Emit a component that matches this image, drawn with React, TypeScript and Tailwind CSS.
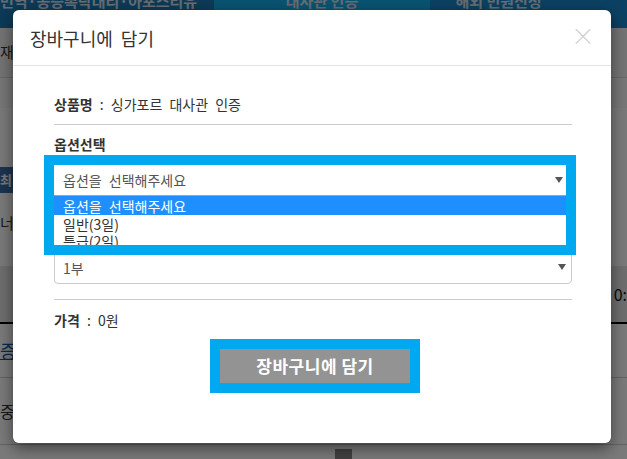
import React from 'react';

const FONT = { fontFamily: '"Noto Sans CJK KR", "Noto Sans", sans-serif' };

const Caret = () => (
  <svg width="8" height="6" viewBox="0 0 8 6" className="shrink-0">
    <path d="M0 0 L8 0 L4 6 Z" fill="#555" />
  </svg>
);

// page behind the modal (only edges are visible)
const BackPage: React.FC = () => (
  <div className="flex flex-col w-full h-full bg-white">
    <div className="h-[28px] flex overflow-hidden bg-[#1a7ab8] text-[#d8e4ee] text-[15px] font-bold">
      <div className="w-[214px] flex items-start -mt-[10px]">번역·공증촉탁대리·아포스티유</div>
      <div className="w-[216px] flex justify-center items-start -mt-[10px] bg-[#14b0ee]">대사관 인증</div>
      <div className="flex-1 flex justify-center items-start -mt-[10px] pr-[60px] bg-[#1a88d0]">해외 민원신청</div>
    </div>
    <div className="h-[50px] bg-[#f2f2f2] border-b border-[#d8d8d8] flex items-center text-[15px] text-[#333]">재 대</div>
    <div className="h-[30px] bg-[#f8f8f8]" />
    <div className="h-[59px]" />
    <div className="h-[26px] flex">
      <div className="w-[14px] bg-[#3c6ea8] text-white text-[13px] font-bold flex items-center">최</div>
    </div>
    <div className="h-[22px]" />
    <div className="h-[18px] flex items-center text-[15px] text-[#333]">너<span className="w-[2px] h-[14px] bg-[#3c7cc0] ml-[1px]" /></div>
    <div className="h-[34px]" />
    <div className="h-[56px] bg-[#e6e6e6] flex items-center justify-end text-[16px] text-[#111]">0:</div>
    <div className="h-[2px] bg-black" />
    <div className="h-[54px] border-b border-[#cfcfcf] flex items-center text-[18px] text-[#0a5aa8] underline">증</div>
    <div className="h-[67px] border-b border-[#cfcfcf] flex items-center text-[16px] text-[#333]">중</div>
    <div className="flex-1 flex pt-[4px] pl-[335px] text-[13px] text-[#333]">
      <span className="w-[17px] h-[10px] bg-[#888]" />
    </div>
  </div>
);

const App: React.FC = () => {
  return (
    <div className="relative w-[627px] h-[459px] overflow-hidden" style={FONT}>
      <BackPage />
      <div className="absolute inset-0 bg-black/[0.52]" />

      <div className="absolute left-[13px] top-[10px] w-[598px] h-[433px] bg-white rounded-[6px] shadow-[0_5px_15px_rgba(0,0,0,0.5)] flex flex-col [word-spacing:4px]">
        <div className="h-[56px] shrink-0 border-b border-[#e5e5e5] flex items-center pl-[17px] pr-[16px]">
          <h4 className="text-[18px] text-[#333] leading-none">장바구니에 담기</h4>
          <div className="flex-1" />
          <button className="text-[24px] leading-none text-[#cfcfcf] font-light -mt-[6px]">×</button>
        </div>

        <div className="flex flex-col pl-[41px] pr-[39px] pt-[28px] text-[14px] text-[#333]">
          <p className="leading-[20px]"><b className="font-semibold">상품명</b> : 싱가포르 대사관 인증</p>
          <hr className="mt-[10px] border-[#cccccc]" />
          <p className="mt-[9px] leading-[20px] font-bold">옵션선택</p>

          <div className="relative z-10 mt-[1px] -ml-[10px] w-[532px] border-[10px] border-[#00a8f0] bg-white">
            <div className="h-[30px] flex items-center justify-between pl-[9px] pr-[3px] text-[#555]">
              <span>옵션을 선택해주세요</span>
              <Caret />
            </div>
            <div className="h-[50px] overflow-hidden border-t border-[#8aa6d4] text-[14px] leading-[16px]">
              <div className="h-[19px] bg-[#1e8fff] text-white flex items-center pl-[9px]">옵션을 선택해주세요</div>
              <div className="h-[17px] text-[#333] flex items-center pl-[9px]">일반(3일)</div>
              <div className="h-[17px] text-[#333] flex items-center pl-[9px]">특급(2일)</div>
            </div>
          </div>

          <div className="-mt-[5px] h-[34px] border border-[#ccc] rounded-[4px] flex items-center justify-between pl-[8px] pr-[5px] text-[#555]">
            <span className="pt-[2px]">1부</span>
            <Caret />
          </div>

          <hr className="mt-[15px] border-[#cccccc]" />
          <p className="mt-[10px] leading-[20px]"><b className="font-semibold">가격</b> : 0원</p>

          <div className="mt-[9px] self-center ml-[4px] border-[10px] border-[#00a8f0]">
            <button className="w-[190px] h-[34px] bg-[#939393] text-white text-[17px] font-bold tracking-[0.5px] flex items-center justify-center">
              장바구니에 담기
            </button>
          </div>
        </div>
      </div>
    </div>
  );
};

export default App;
